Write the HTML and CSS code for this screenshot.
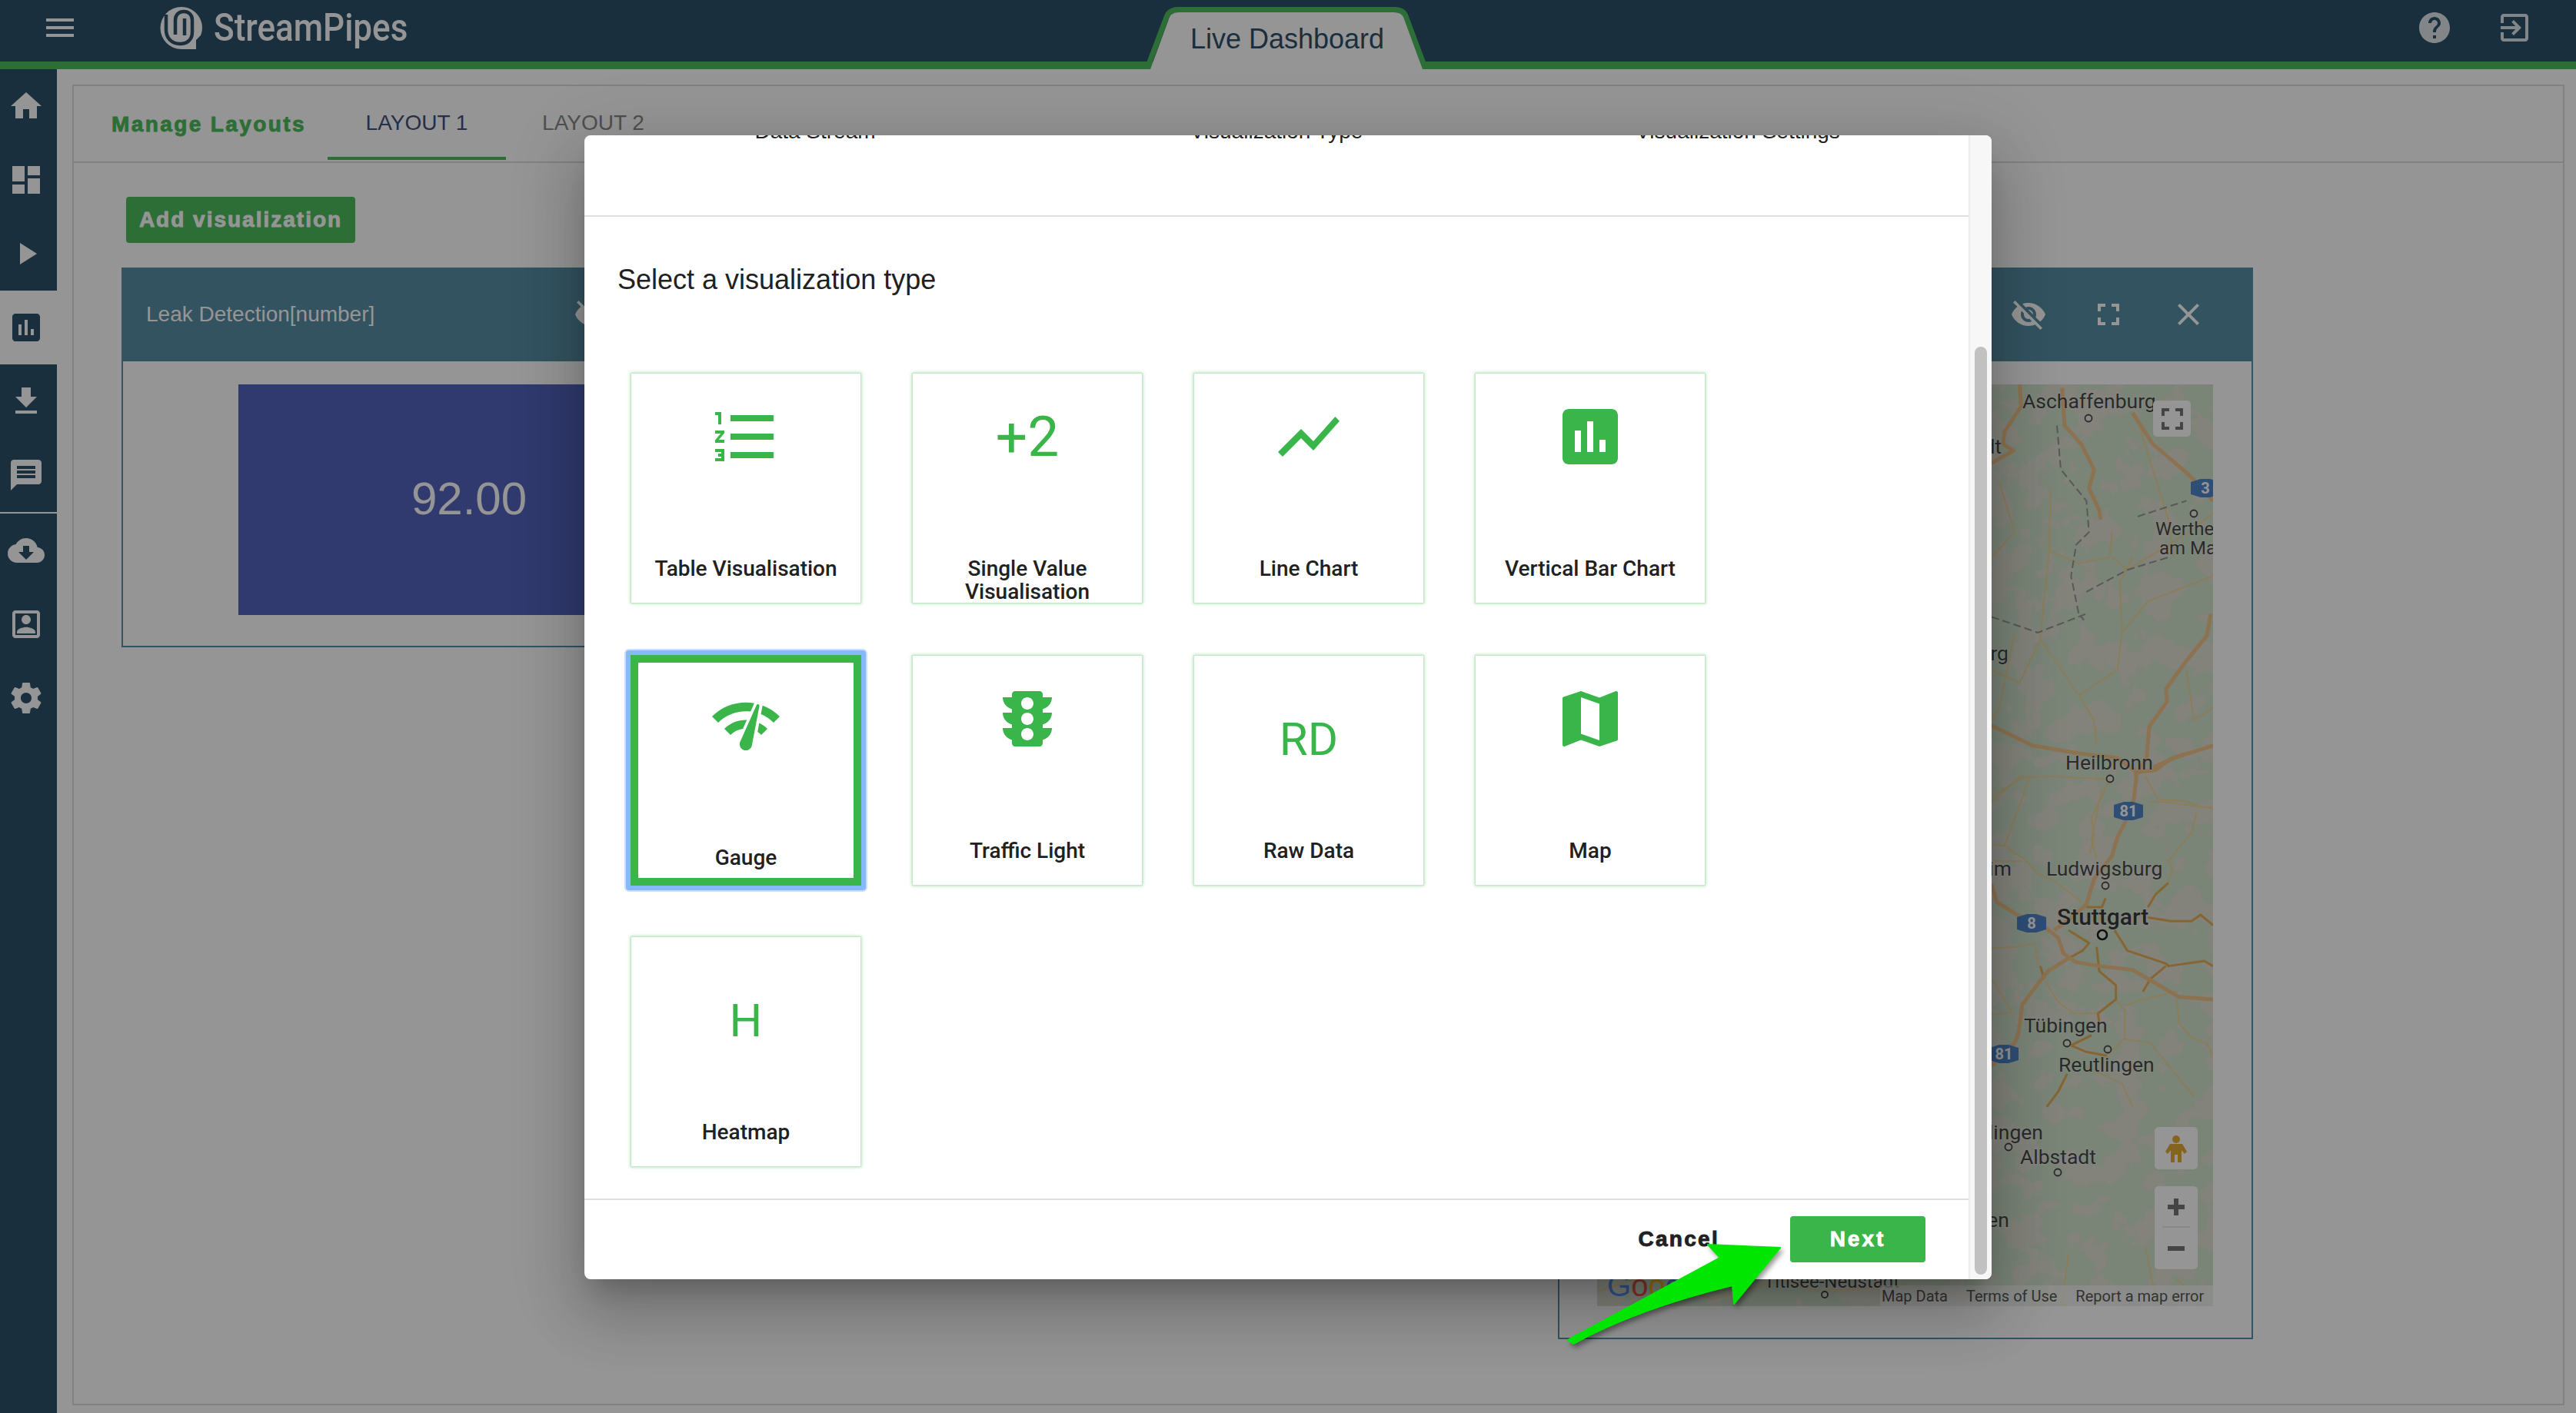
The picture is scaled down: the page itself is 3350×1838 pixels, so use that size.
FILE: index.html
```html
<!doctype html>
<html>
<head>
<meta charset="utf-8">
<title>StreamPipes - Live Dashboard</title>
<link rel="stylesheet" href="styles.css">
</head>

<body>
<svg class="sprite">
	<symbol id="i-menu" viewBox="0 0 24 24"><path d="M3 18h18v-2H3v2zm0-5h18v-2H3v2zm0-7v2h18V6H3z"/></symbol>
	<symbol id="i-home" viewBox="0 0 24 24"><path d="M10 20v-6h4v6h5v-8h3L12 3 2 12h3v8z"/></symbol>
	<symbol id="i-dash" viewBox="0 0 24 24"><path d="M3 13h8V3H3v10zm0 8h8v-6H3v6zm10 0h8V11h-8v10zm0-18v6h8V3h-8z"/></symbol>
	<symbol id="i-play" viewBox="0 0 24 24"><path d="M8 5v14l11-7z"/></symbol>
	<symbol id="i-chart" viewBox="0 0 24 24"><path d="M19 3H5c-1.1 0-2 .9-2 2v14c0 1.1.9 2 2 2h14c1.1 0 2-.9 2-2V5c0-1.1-.9-2-2-2zM9 17H7v-7h2v7zm4 0h-2V7h2v10zm4 0h-2v-4h2v4z"/></symbol>
	<symbol id="i-down" viewBox="0 0 24 24"><path d="M19 9h-4V3H9v6H5l7 7 7-7zM5 18v2h14v-2H5z"/></symbol>
	<symbol id="i-msg" viewBox="0 0 24 24"><path d="M20 2H4c-1.1 0-1.99.9-1.99 2L2 22l4-4h14c1.1 0 2-.9 2-2V4c0-1.1-.9-2-2-2zm-2 12H6v-2h12v2zm0-3H6V9h12v2zm0-3H6V6h12v2z"/></symbol>
	<symbol id="i-cloud" viewBox="0 0 24 24"><path d="M19.35 10.04C18.67 6.59 15.64 4 12 4 9.11 4 6.6 5.64 5.35 8.04 2.34 8.36 0 10.91 0 14c0 3.31 2.69 6 6 6h13c2.76 0 5-2.24 5-5 0-2.64-2.05-4.78-4.65-4.96zM17 13l-5 5-5-5h3V9h4v4h3z"/></symbol>
	<symbol id="i-person" viewBox="0 0 24 24"><path d="M19 5v14H5V5h14m0-2H5c-1.11 0-2 .9-2 2v14c0 1.1.89 2 2 2h14c1.1 0 2-.9 2-2V5c0-1.1-.9-2-2-2zm-7 9c1.65 0 3-1.35 3-3s-1.35-3-3-3-3 1.35-3 3 1.35 3 3 3zm-6 6h12v-1c0-2-4-3.1-6-3.1S6 15 6 17v1z"/></symbol>
	<symbol id="i-gear" viewBox="0 0 24 24"><path d="M19.43 12.98c.04-.32.07-.64.07-.98s-.03-.66-.07-.98l2.11-1.65c.19-.15.24-.42.12-.64l-2-3.46c-.12-.22-.39-.3-.61-.22l-2.49 1c-.52-.4-1.08-.73-1.69-.98l-.38-2.65C14.46 2.18 14.25 2 14 2h-4c-.25 0-.46.18-.49.42l-.38 2.65c-.61.25-1.17.59-1.69.98l-2.49-1c-.23-.09-.49 0-.61.22l-2 3.46c-.13.22-.07.49.12.64l2.11 1.65c-.04.32-.07.65-.07.98s.03.66.07.98l-2.11 1.65c-.19.15-.24.42-.12.64l2 3.46c.12.22.39.3.61.22l2.49-1c.52.4 1.08.73 1.69.98l.38 2.65c.03.24.24.42.49.42h4c.25 0 .46-.18.49-.42l.38-2.65c.61-.25 1.17-.59 1.69-.98l2.49 1c.23.09.49 0 .61-.22l2-3.46c.12-.22.07-.49-.12-.64l-2.11-1.65zM12 15.5c-1.93 0-3.5-1.57-3.5-3.5s1.57-3.5 3.5-3.5 3.5 1.57 3.5 3.5-1.57 3.5-3.5 3.5z"/></symbol>
	<symbol id="i-help" viewBox="0 0 24 24"><path d="M12 2C6.48 2 2 6.48 2 12s4.48 10 10 10 10-4.48 10-10S17.52 2 12 2zm1 17h-2v-2h2v2zm2.07-7.75l-.9.92C13.45 12.9 13 13.5 13 15h-2v-.5c0-1.1.45-2.1 1.17-2.83l1.24-1.26c.37-.36.59-.86.59-1.41 0-1.1-.9-2-2-2s-2 .9-2 2H8c0-2.21 1.79-4 4-4s4 1.79 4 4c0 .88-.36 1.68-.93 2.25z"/></symbol>
	<symbol id="i-exit" viewBox="0 0 24 24"><path d="M10.09 15.59L11.5 17l5-5-5-5-1.41 1.41L12.67 11H3v2h9.67l-2.58 2.59zM19 3H5c-1.11 0-2 .9-2 2v4h2V5h14v14H5v-4H3v4c0 1.1.89 2 2 2h14c1.1 0 2-.9 2-2V5c0-1.1-.9-2-2-2z"/></symbol>
	<symbol id="i-eyeoff" viewBox="0 0 24 24"><path d="M12 7c2.76 0 5 2.24 5 5 0 .65-.13 1.26-.36 1.83l2.92 2.92c1.51-1.26 2.7-2.89 3.43-4.75-1.73-4.39-6-7.5-11-7.5-1.4 0-2.74.25-3.98.7l2.16 2.16C10.74 7.13 11.35 7 12 7zM2 4.27l2.28 2.28.46.46C3.08 8.3 1.78 10.02 1 12c1.73 4.39 6 7.5 11 7.5 1.55 0 3.03-.3 4.38-.84l.42.42L19.73 22 21 20.73 3.27 3 2 4.27zM7.53 9.8l1.55 1.55c-.05.21-.08.43-.08.65 0 1.66 1.34 3 3 3 .22 0 .44-.03.65-.08l1.55 1.55c-.67.33-1.41.53-2.2.53-2.76 0-5-2.24-5-5 0-.79.2-1.53.53-2.2zm4.31-.78l3.15 3.15.02-.16c0-1.66-1.34-3-3-3l-.17.01z"/></symbol>
	<symbol id="i-full" viewBox="0 0 24 24"><path d="M7 14H5v5h5v-2H7v-3zm-2-4h2V7h3V5H5v5zm12 7h-3v2h5v-5h-2v3zM14 5v2h3v3h2V5h-5z"/></symbol>
	<symbol id="i-close" viewBox="0 0 24 24"><path d="M19 6.41L17.59 5 12 10.59 6.41 5 5 6.41 10.59 12 5 17.59 6.41 19 12 13.41 17.59 19 19 17.59 13.41 12z"/></symbol>
	<symbol id="i-list" viewBox="0 0 24 24"><path d="M2 17h2v.5H3v1h1v.5H2v1h3v-4H2v1zm1-9h1V4H2v1h1v3zm-1 3h1.8L2 13.1v.9h3v-1H3.2L5 10.9V10H2v1zm5-6v2h14V5H7zm0 14h14v-2H7v2zm0-6h14v-2H7v2z"/></symbol>
	<symbol id="i-line" viewBox="0 0 24 24"><path d="M3.5 18.49l6-6.01 4 4L22 6.92l-1.41-1.41-7.09 7.97-4-4L2 16.99z"/></symbol>
	<symbol id="i-gauge" viewBox="0 0 24 24"><path d="M15.9 5c-.17 0-.32.09-.41.23l-.07.15-5.18 11.65c-.16.29-.26.61-.26.96 0 1.11.9 2.01 2.01 2.01.96 0 1.77-.68 1.96-1.59l.01-.03L16.4 5.5c0-.28-.22-.5-.5-.5zM1 9l2 2c2.88-2.88 6.79-4.08 10.53-3.62l1.19-2.68C9.89 3.84 4.74 5.27 1 9zm20 2l2-2c-1.64-1.64-3.55-2.82-5.59-3.57l-.53 2.82c1.5.62 2.9 1.53 4.12 2.75zm-4 4l2-2c-.8-.8-1.7-1.42-2.66-1.89l-.55 2.92c.42.27.83.59 1.21.97zM5 13l2 2c1.13-1.13 2.56-1.79 4.03-2l1.28-2.88c-2.63-.08-5.3.87-7.31 2.88z"/></symbol>
	<symbol id="i-traffic" viewBox="0 0 24 24"><path d="M20 10h-3V8.86c1.72-.45 3-2 3-3.86h-3V4c0-.55-.45-1-1-1H8c-.55 0-1 .45-1 1v1H4c0 1.86 1.28 3.41 3 3.86V10H4c0 1.86 1.28 3.41 3 3.86V15H4c0 1.86 1.28 3.41 3 3.86V20c0 .55.45 1 1 1h8c.55 0 1-.45 1-1v-1.14c1.72-.45 3-2 3-3.86h-3v-1.14c1.72-.45 3-2 3-3.86zm-8 9c-1.11 0-2-.9-2-2s.89-2 2-2c1.1 0 2 .9 2 2s-.89 2-2 2zm0-5c-1.11 0-2-.9-2-2s.89-2 2-2c1.1 0 2 .9 2 2s-.89 2-2 2zm0-5c-1.11 0-2-.9-2-2 0-1.11.89-2 2-2 1.1 0 2 .89 2 2 0 1.1-.89 2-2 2z"/></symbol>
	<symbol id="i-map" viewBox="0 0 24 24"><path d="M20.5 3l-.16.03L15 5.1 9 3 3.36 4.9c-.21.07-.36.25-.36.48V20.5c0 .28.22.5.5.5l.16-.03L9 18.9l6 2.1 5.64-1.9c.21-.07.36-.25.36-.48V3.5c0-.28-.22-.5-.5-.5zM15 19l-6-2.11V5l6 2.11V19z"/></symbol>
</svg>

<header class="topbar">
	<svg class="ic topbar-menu"><use href="#i-menu"/></svg>
	<div class="logo">
		<svg class="logo-mark" viewBox="0 0 56 56">
			<path class="logo-disc" d="M28 1A27 27 0 0 1 53 38L47 44V56H28A27 27 0 0 1 28 1Z"/>
			<path class="logo-cut" d="M8 11V31C8 41 15 49 26 49C35 49 42 44 42 34V18C42 11 37 7 31 7C25 7 20 11 20 18V37"/>
			<path class="logo-cut" d="M32 16V38"/>
		</svg>
		<span class="logo-text">StreamPipes</span>
	</div>
	<div class="apptab">
		<svg class="apptab-shape" viewBox="0 0 372 90">
			<path class="apptab-line" d="M5.5 85L29.5 21Q33 12.5 45 12.5H325Q337 12.5 340 21L364 85"/>
			<path class="apptab-fill" d="M8 90L33 22Q36 16 45 16H325Q334 16 337 22L362 90Z"/>
		</svg>
		<span class="apptab-text">Live Dashboard</span>
	</div>
	<div class="topbar-right">
		<svg class="ic"><use href="#i-help"/></svg>
		<svg class="ic"><use href="#i-exit"/></svg>
	</div>
</header>

<div class="shell">
	<nav class="sidebar">
		<a class="nav-item"><svg class="ic"><use href="#i-home"/></svg></a>
		<a class="nav-item"><svg class="ic"><use href="#i-dash"/></svg></a>
		<a class="nav-item"><svg class="ic"><use href="#i-play"/></svg></a>
		<a class="nav-item active"><svg class="ic"><use href="#i-chart"/></svg></a>
		<a class="nav-item"><svg class="ic"><use href="#i-down"/></svg></a>
		<a class="nav-item"><svg class="ic"><use href="#i-msg"/></svg></a>
		<div class="nav-line"></div>
		<a class="nav-item"><svg class="ic"><use href="#i-cloud"/></svg></a>
		<a class="nav-item"><svg class="ic"><use href="#i-person"/></svg></a>
		<a class="nav-item"><svg class="ic"><use href="#i-gear"/></svg></a>
	</nav>

	<main class="main">
		<div class="panel">
			<div class="layout-tabs">
				<div class="manage">Manage Layouts</div>
				<div class="layout-tab current">LAYOUT 1</div>
				<div class="layout-tab other">LAYOUT 2</div>
			</div>
			<div class="board">
				<button class="btn-add">Add visualization</button>
				<div class="widgets">
					<section class="widget widget-number">
						<div class="widget-head">
							<span class="widget-title">Leak Detection[number]</span>
							<div class="widget-tools">
								<svg class="ic"><use href="#i-eyeoff"/></svg>
								<svg class="ic"><use href="#i-full"/></svg>
								<svg class="ic"><use href="#i-close"/></svg>
							</div>
						</div>
						<div class="number-box">92.00</div>
					</section>

					<section class="widget widget-geo">
						<div class="widget-head">
							<div class="widget-tools">
								<svg class="ic"><use href="#i-eyeoff"/></svg>
								<svg class="ic"><use href="#i-full"/></svg>
								<svg class="ic"><use href="#i-close"/></svg>
							</div>
						</div>
						<div class="map">
							<svg class="map-canvas" viewBox="0 0 801 1199">
								<defs>
									<filter id="forest" x="0" y="0" width="100%" height="100%">
										<feTurbulence type="fractalNoise" baseFrequency=".024" numOctaves="4" seed="11"/>
										<feColorMatrix values="0 0 0 0 .60  0 0 0 0 .73  0 0 0 0 .56  18 0 0 0 -7.8"/>
									</filter>
								</defs>
								<rect class="land" width="801" height="1199"/>
								<rect width="801" height="1199" filter="url(#forest)"/>

								<!-- north part, coordinates of the tall crop -->
								<g transform="translate(483 -20) scale(.3333 .8163)">
									<path class="minor" d="M320 190L315 290 280 430 430 520 490 560 500 600M560 260L550 300 430 310 320 290M954 330L700 370 600 420 580 480 430 520M120 180L180 260 90 300M180 420L120 540 90 560M954 230L860 260 620 320 560 300M250 650L200 650 90 690M520 670L480 750 500 780M700 690L760 690 954 700M90 480L200 500 280 430M600 420L590 340 640 300M850 480L880 560 954 540M240 650L140 760M800 300L780 240 650 70"/>
									<path class="border-line" d="M345 90L360 160 460 210 470 260 420 280 400 330 430 390 450 400M90 395L200 410 270 420 460 390M660 235L850 210M460 355L620 320 780 300"/>
									<path class="motorway" d="M200 25L205 60 140 100 135 120 175 130 90 150"/>
									<path class="motorway" d="M365 30L375 90 440 120 490 160 470 190 510 225 515 240"/>
									<path class="motorway" d="M640 70L720 120 850 165 900 185 954 210"/>
									<path class="motorway" d="M945 390L930 425 850 465 770 510 775 530 705 570 695 620 650 650"/>
									<path class="motorway" d="M720 635L800 620 954 600M90 568L250 600 420 612 580 620 650 640"/>
								</g>

								<!-- Stuttgart part, coordinates of the 3x crop -->
								<g transform="translate(513 480) scale(.3333)">
									<path class="minor" d="M0 170L120 95 230 90 340 95 460 100 430 170 390 250 400 320 385 390M600 90L650 180 750 185 820 210 864 210M800 230L780 310 690 420 705 450 690 500M0 355L50 360 130 415 180 470 250 500 350 580M0 760L100 755 170 740 180 830M210 890L260 970 320 1015 415 1015M480 960L520 1000 520 1110 450 1180M590 960L520 985M590 960L720 930 730 1050 780 1110 840 1130 864 1185M520 1115L620 1130 700 1230 790 1340M0 880L50 960 80 1010 0 1020M300 1190L510 1290 550 1380M0 420L120 420"/>
									<path class="trunk" d="M690 505L640 550 610 600M610 640L700 655 780 655 815 630 864 670M480 690L530 770 680 820 690 830 830 810 864 830M680 830L620 880 590 930M410 755L420 850 485 905 485 960 415 1015 420 1050M300 690L380 740 355 770 300 800M445 565L430 600 370 600M190 830L205 880M310 1140L370 1165 450 1180M310 1140L390 1100M295 1250L260 1320 215 1380"/>
									<path class="motorway" d="M565 90L555 180 525 260 490 330 470 400 400 490 370 590 300 650 245 690M555 75L640 65 700 20 760 0M0 510L20 580 100 630 210 680 260 720 280 780 330 815 420 830 550 845 620 885 730 950 864 960M300 800L220 850 180 900 120 980 105 1090 90 1130 0 1220"/>
								</g>
								<g transform="translate(513 -20) scale(.3333 .8163)">
									<path class="minor" d="M0 1500L100 1520 200 1480 350 1500 500 1470M600 1400L650 1500 840 1580M300 1410L260 1530M720 1450L864 1500"/>
								</g>

								<path class="minor-abs" d="M0 1180L60 1160 150 1190 240 1165 290 1180 400 1172 520 1190"/>

								<g class="shield" transform="translate(791 135)"><path d="M-19 -8L-6 -12 6 -12 19 -8V8L6 12-6 12-19 8Z"/><text y="7">3</text></g>
								<g class="shield" transform="translate(691 555)"><path d="M-19 -8L-6 -12 6 -12 19 -8V8L6 12-6 12-19 8Z"/><text y="7">81</text></g>
								<g class="shield" transform="translate(565 701)"><path d="M-19 -8L-6 -12 6 -12 19 -8V8L6 12-6 12-19 8Z"/><text y="7">8</text></g>
								<g class="shield" transform="translate(529 871)"><path d="M-19 -8L-6 -12 6 -12 19 -8V8L6 12-6 12-19 8Z"/><text y="7">81</text></g>

								<g class="towns">
									<circle cx="639" cy="44" r="4.5"/>
									<circle cx="776" cy="168" r="4.5"/>
									<circle cx="667" cy="513" r="4.5"/>
									<circle cx="661" cy="652" r="4.5"/>
									<circle class="big" cx="657" cy="716" r="6"/>
									<circle cx="611" cy="857" r="4.5"/>
									<circle cx="664" cy="865" r="4.5"/>
									<circle cx="535" cy="992" r="4.5"/>
									<circle cx="599" cy="1025" r="4.5"/>
									<circle cx="296" cy="1184" r="4"/>
								</g>
								<g class="labels">
									<text x="553" y="31">Aschaffenburg</text>
									<text x="526" y="90" text-anchor="end">dt</text>
									<text class="small" x="726" y="196">Wertheim</text>
									<text class="small" x="731" y="221">am Main</text>
									<text x="535" y="359" text-anchor="end">rg</text>
									<text x="609" y="501">Heilbronn</text>
									<text x="539" y="639" text-anchor="end">im</text>
									<text x="584" y="639">Ludwigsburg</text>
									<text class="city" x="598" y="703">Stuttgart</text>
									<text x="555" y="843">Tübingen</text>
									<text x="600" y="894">Reutlingen</text>
									<text x="580" y="982" text-anchor="end">lingen</text>
									<text x="550" y="1014">Albstadt</text>
									<text x="536" y="1096" text-anchor="end">en</text>
									<text class="small" x="217" y="1175">Titisee-Neustadt</text>
								</g>
								<text class="google" x="13" y="1186"><tspan class="g-blue">G</tspan><tspan class="g-red">o</tspan><tspan class="g-yellow">o</tspan><tspan class="g-blue">g</tspan></text>
							</svg>

							<div class="map-btn map-full"><svg class="ic"><use href="#i-full"/></svg></div>
							<div class="map-btn map-peg">
								<svg viewBox="0 0 32 36">
									<circle cx="16" cy="6" r="5"/>
									<path d="M8 12h16l6 10-3 3-4-5v16h-5V26h-4v10H9V20l-4 5-3-3z"/>
								</svg>
							</div>
							<div class="map-btn map-zoom">
								<span class="zoom-in"></span>
								<span class="zoom-line"></span>
								<span class="zoom-out"></span>
							</div>
							<div class="map-foot">
								<span>Map Data</span>
								<span>Terms of Use</span>
								<span>Report a map error</span>
							</div>
						</div>
					</section>
				</div>
			</div>
		</div>
	</main>
</div>

<div class="backdrop"></div>

<div class="dialog">
	<div class="dlg-main">
		<div class="dlg-steps">
			<div class="dlg-step">Data Stream</div>
			<div class="dlg-step">Visualization Type</div>
			<div class="dlg-step">Visualization Settings</div>
		</div>
		<div class="dlg-body">
			<h2 class="dlg-title">Select a visualization type</h2>
			<div class="tiles">
				<div class="tile">
					<svg class="ic tile-icon"><use href="#i-list"/></svg>
					<div class="tile-name">Table Visualisation</div>
				</div>
				<div class="tile">
					<div class="tile-plus">+2</div>
					<div class="tile-name">Single Value Visualisation</div>
				</div>
				<div class="tile">
					<svg class="ic tile-icon"><use href="#i-line"/></svg>
					<div class="tile-name">Line Chart</div>
				</div>
				<div class="tile">
					<svg class="ic tile-icon"><use href="#i-chart"/></svg>
					<div class="tile-name">Vertical Bar Chart</div>
				</div>
				<div class="tile selected">
					<svg class="ic tile-icon"><use href="#i-gauge"/></svg>
					<div class="tile-name">Gauge</div>
				</div>
				<div class="tile">
					<svg class="ic tile-icon"><use href="#i-traffic"/></svg>
					<div class="tile-name">Traffic Light</div>
				</div>
				<div class="tile">
					<div class="tile-letters">RD</div>
					<div class="tile-name">Raw Data</div>
				</div>
				<div class="tile">
					<svg class="ic tile-icon"><use href="#i-map"/></svg>
					<div class="tile-name">Map</div>
				</div>
				<div class="tile">
					<div class="tile-letters">H</div>
					<div class="tile-name">Heatmap</div>
				</div>
			</div>
		</div>
		<div class="dlg-foot">
			<button class="btn-cancel">Cancel</button>
			<button class="btn-next">Next</button>
		</div>
	</div>
	<div class="dlg-scroll"><div class="dlg-thumb"></div></div>
</div>

<svg class="pointer" viewBox="0 0 300 150">
	<path d="M285 13L191 9 207 26 9 133 16 138Q100 92 223 62L225 86Z"/>
</svg>
</body>
</html>
```

FILE: styles.css
```css
*{ margin:0; padding:0; box-sizing:border-box;}
html,body{ width:3350px; height:1838px; overflow:hidden;}
body{ background:#fff; font-family:"Liberation Sans",Arial,sans-serif; color:#212121; position:relative;}
button{ font-family:inherit; border:0; background:none;}
.sprite{ width:0; height:0; position:absolute;}
.ic{ width:48px; height:48px; fill:currentColor; flex:none; display:block;}

/* top bar */
.topbar{ height:90px; background:#143c59; border-bottom:10px solid #39b54a; display:flex; align-items:flex-start; padding:12px 56px 0 54px; color:#fff;}
.logo{ display:flex; align-items:center; margin:-4px 0 0 106px; height:56px;}
.logo-mark{ width:56px; height:56px;}
.logo-disc{ fill:#fff;}
.logo-cut{ fill:none; stroke:#143c59; stroke-width:4.5;}
.logo-text{ font-family:Roboto,sans-serif; font-weight:500; font-size:50px; line-height:56px; margin-left:14px; display:inline-block; transform:scaleX(.88); transform-origin:left center;}
.topbar-right{ margin-left:auto; display:flex; gap:56px; color:rgba(255,255,255,.85);}
.apptab{ position:absolute; left:1488px; top:0; width:372px; height:90px; display:flex; justify-content:center; padding-top:30px;}
.apptab-shape{ position:absolute; left:0; top:0; width:372px; height:90px;}
.apptab-line{ fill:none; stroke:#39b54a; stroke-width:7;}
.apptab-fill{ fill:#fff;}
.apptab-text{ position:relative; font-size:36px; line-height:42px; color:#143c59;}

/* left menu */
.shell{ display:flex; height:1748px;}
.sidebar{ width:74px; background:#143c59; color:#fff; flex:none;}
.nav-item{ display:flex; align-items:center; height:96px; padding-left:10px;}
.nav-item.active{ background:#fff; color:#143c59;}
.nav-line{ height:2px; background:#fff;}

/* page */
.main{ flex:1; padding:20px 15px 10px 20px; min-width:0;}
.panel{ height:100%; border:2px solid #d8d8d8;}
.layout-tabs{ display:flex; height:100px; border-bottom:2px solid #d8d8d8;}
.manage{ width:330px; padding:33px 0 0 49px; font-size:28px; line-height:34px; font-weight:bold; letter-spacing:2.4px; color:#39b54a; -webkit-text-stroke:.9px #39b54a;}
.layout-tab{ width:232px; height:96px; text-align:center; font-size:28px; line-height:32px; padding-top:32px; color:#7a7a7a;}
.layout-tab.current{ color:#2c3a6b; border-bottom:4px solid #39b54a;}
.layout-tab.other{ padding-right:5px;}

.board{ padding:44px 0 0 68px;}
.btn-add{ display:block; width:298px; height:60px; border-radius:4px; background:#39b54a; color:#fff; font-size:28px; font-weight:bold; letter-spacing:2px; -webkit-text-stroke:.9px #fff;}
.widgets{ display:flex; align-items:flex-start; gap:964px; margin:32px 0 0 -6px;}
.widget{ width:904px; border:2px solid #43809a; flex:none;}
.widget-number{ height:494px;}
.widget-geo{ height:1394px;}
.widget-head{ height:122px; margin:-2px -2px 0; background:#43809a; color:#fff; display:flex; align-items:center; padding:0 60px 0 32px;}
.widget-title{ font-size:28px;}
.widget-tools{ margin-left:auto; display:flex; gap:56px;}
.number-box{ width:600px; height:300px; margin:30px 0 0 150px; padding-bottom:3px; background:#3f51b5; color:#fff; font-size:60px; display:flex; align-items:center; justify-content:center;}

/* map */
.map{ position:relative; width:801px; height:1199px; margin:30px 0 0 49px; overflow:hidden;}
.map-canvas{ width:801px; height:1199px; display:block;}
.land{ fill:#dcdcd0;}
.minor,.minor-abs{ fill:none; stroke:#ecd08e; stroke-width:2; vector-effect:non-scaling-stroke;}
.border-line{ fill:none; stroke:#8a8a8a; stroke-width:2; stroke-dasharray:10 5; vector-effect:non-scaling-stroke;}
.motorway{ fill:none; stroke:#eebd7c; stroke-width:5; stroke-linejoin:round; vector-effect:non-scaling-stroke;}
.trunk{ fill:none; stroke:#e2a440; stroke-width:3; stroke-linejoin:round; vector-effect:non-scaling-stroke;}
.shield path{ fill:#3a78c4;}
.shield text{ fill:#fff; font:bold 20px Roboto,sans-serif; text-anchor:middle;}
.towns circle{ fill:#fff; fill-opacity:.3; stroke:#333; stroke-width:1.8;}
.towns .big{ stroke:#000; stroke-width:2.6;}
.labels text{ font:26.5px Roboto,sans-serif; fill:#333; stroke:#fff; stroke-opacity:.3; stroke-width:2px; paint-order:stroke;}
.labels .small{ font-size:24px;}
.labels .city{ font-size:30px; font-weight:500; fill:#222;}
.google{ font:40px "Liberation Sans",sans-serif;}
.g-blue{ fill:#4285f4;}
.g-red{ fill:#ea4335;}
.g-yellow{ fill:#fbbc05;}
.map-btn{ position:absolute; background:#fff; border-radius:5px; display:flex; align-items:center; justify-content:center;}
.map-full{ left:723px; top:21px; width:49px; height:47px; color:#666;}
.map-peg{ left:725px; top:966px; width:56px; height:55px;}
.map-peg svg{ width:32px; height:38px; fill:#e0a020;}
.map-zoom{ left:725px; top:1043px; width:56px; height:108px; flex-direction:column;}
.zoom-in,.zoom-out{ display:block; background:#666; width:22px; height:6px; position:relative;}
.zoom-in::after{ content:""; position:absolute; left:8px; top:-8px; width:6px; height:22px; background:#666;}
.zoom-in{ margin-bottom:22px;}
.zoom-line{ display:block; width:36px; height:2px; background:#e6e6e6;}
.zoom-out{ margin-top:24px;}
.map-foot{ position:absolute; right:0; bottom:0; height:27px; width:433px; background:rgba(245,245,245,.7); display:flex; align-items:center; gap:24px; padding-left:2px; font:20px Roboto,sans-serif; color:#444; white-space:nowrap;}

/* dialog */
.backdrop{ position:absolute; left:0; top:0; width:3350px; height:1838px; background:rgba(33,33,33,.48);}
.dialog{ position:absolute; left:760px; top:176px; width:1830px; height:1488px; background:#fff; border-radius:8px; overflow:hidden; display:flex; box-shadow:0 22px 30px -14px rgba(0,0,0,.2),0 48px 76px 6px rgba(0,0,0,.14),0 18px 92px 16px rgba(0,0,0,.12);}
.dlg-main{ width:1800px; display:flex; flex-direction:column;}
.dlg-steps{ height:106px; flex:none; border-bottom:2px solid #e0e0e0; display:flex; overflow:hidden;}
.dlg-step{ width:600px; margin-top:-21px; height:32px; text-align:center; font-size:28px; line-height:32px; color:#212121;}
.dlg-body{ flex:1; padding:62px 0 0 43px;}
.dlg-title{ font-size:36px; line-height:40px; font-weight:normal; color:#212121;}
.tiles{ display:grid; grid-template-columns:repeat(4,300px); grid-auto-rows:300px; column-gap:66px; row-gap:66.5px; margin:101px 0 0 17px;}
.tile{ border:1px solid #c6e8ca; box-shadow:0 0 4px rgba(57,181,74,.5); padding-top:34px; display:flex; flex-direction:column; align-items:center; background:#fff; position:relative;}
.tile.selected{ border:10px solid #39b54a; box-shadow:none; outline:6px solid #85baf8; outline-offset:0;}
.tile.selected::before{ content:""; position:absolute; left:-18px; top:-18px; right:-18px; bottom:-18px; border:2px solid #c9dffb; border-radius:6px;}
.tile-icon{ width:96px; height:96px; color:#39b54a;}
.tile-plus,.tile-letters{ height:96px; font-family:Roboto,sans-serif; color:#39b54a;}
.tile-plus{ font-size:73px; line-height:96px;}
.tile-letters{ font-size:60px; line-height:149px;}
.tile-name{ margin-top:109px; width:260px; text-align:center; font-family:Roboto,sans-serif; font-weight:500; font-size:28px; line-height:30px; color:#212121;}
.dlg-foot{ height:105px; flex:none; border-top:2px solid #e0e0e0; display:flex; justify-content:flex-end; align-items:flex-start; padding:21px 56px 0 0;}
.btn-cancel{ height:60px; margin-right:92px; font-size:28px; font-weight:bold; letter-spacing:2.3px; color:#212121; -webkit-text-stroke:.9px #212121;}
.btn-next{ width:176px; height:60px; border-radius:4px; background:#39b54a; color:#fff; font-size:28px; font-weight:bold; letter-spacing:3px; -webkit-text-stroke:.8px #fff;}
.dlg-scroll{ width:30px; background:#f7f7f7; border-left:2px solid #ebebeb; padding:275px 0 0 6px;}
.dlg-thumb{ width:16px; height:1207px; background:#c1c1c1; border-radius:8px;}

/* green arrow drawn on the screenshot */
.pointer{ position:absolute; left:2030px; top:1610px; width:300px; height:150px; overflow:visible; filter:drop-shadow(3px 4px 3px rgba(0,0,0,.4));}
.pointer path{ fill:#00e600; stroke:#00e600; stroke-width:2; stroke-linejoin:round;}
```
